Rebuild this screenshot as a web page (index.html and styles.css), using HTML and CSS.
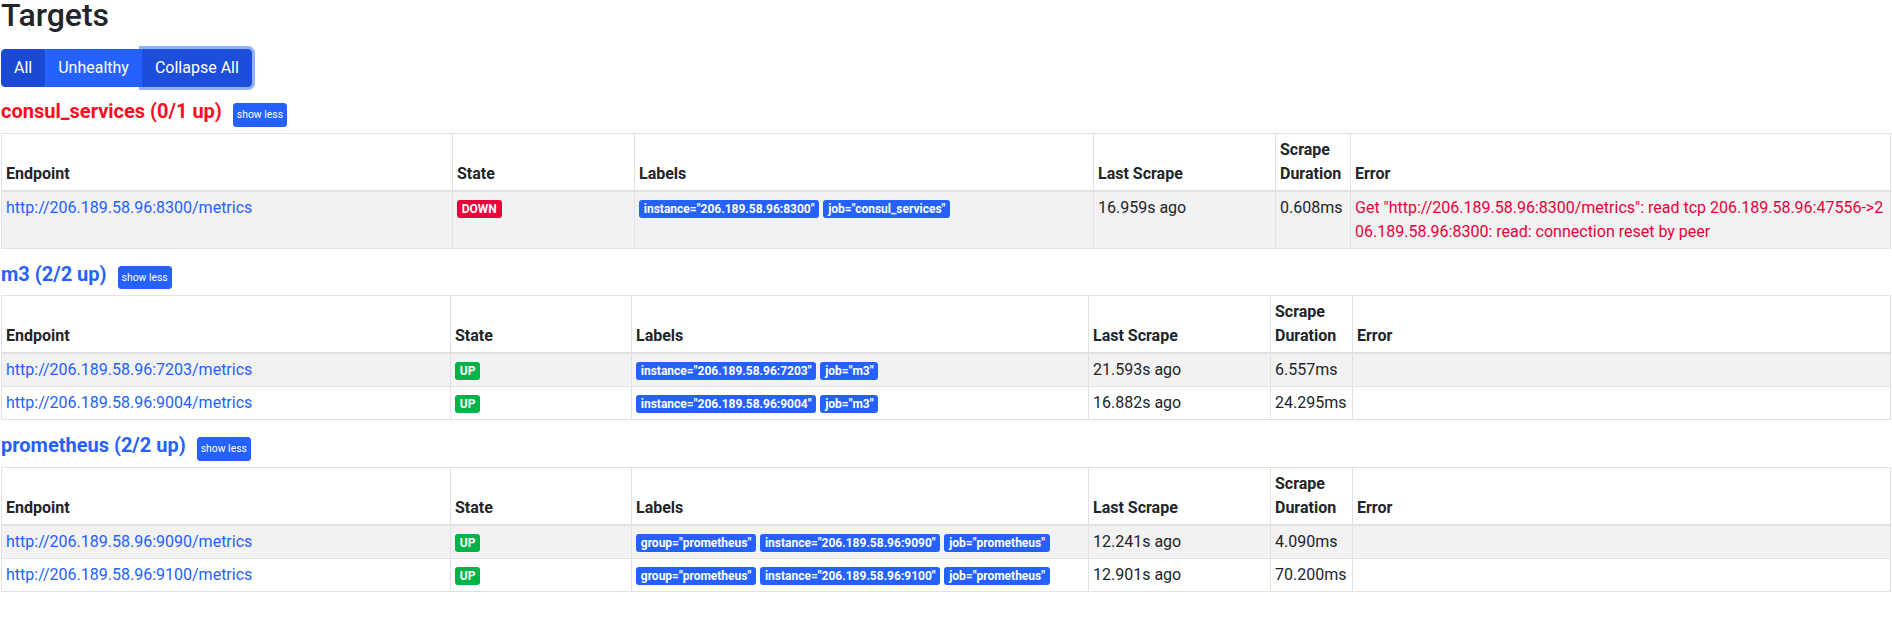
FILE: index.html
```html
<!DOCTYPE html>
<html lang="en">
<head>
<meta charset="utf-8">
<title>Targets</title>
<link rel="stylesheet" href="styles.css">
</head>
<body>
<main class="page">
  <h2 class="page-title">Targets</h2>
  <div class="btn-group">
    <button class="btn is-active">All</button>
    <button class="btn">Unhealthy</button>
    <button class="btn is-focused">Collapse All</button>
  </div>

  <section class="pool">
    <div class="pool-head"><a class="pool-title pool-title--danger" href="#consul_services">consul_services (0/1 up)</a><button class="btn-xs">show less</button></div>
    <table class="targets targets--error">
      <thead>
        <tr>
          <th class="c-endpoint">Endpoint</th>
          <th class="c-state">State</th>
          <th class="c-labels">Labels</th>
          <th class="c-last">Last Scrape</th>
          <th class="c-duration">Scrape Duration</th>
          <th class="c-error">Error</th>
        </tr>
      </thead>
      <tbody>
        <tr>
          <td><a href="#t1">http://206.189.58.96:8300/metrics</a></td>
          <td><span class="badge badge--down">DOWN</span></td>
          <td><span class="badge badge--label">instance="206.189.58.96:8300"</span><span class="badge badge--label">job="consul_services"</span></td>
          <td>16.959s ago</td>
          <td>0.608ms</td>
          <td class="error-text">Get "http://206.189.58.96:8300/metrics": read tcp 206.189.58.96:47556-&gt;206.189.58.96:8300: read: connection reset by peer</td>
        </tr>
      </tbody>
    </table>
  </section>

  <section class="pool">
    <div class="pool-head"><a class="pool-title" href="#m3">m3 (2/2 up)</a><button class="btn-xs">show less</button></div>
    <table class="targets">
      <thead>
        <tr>
          <th class="c-endpoint">Endpoint</th>
          <th class="c-state">State</th>
          <th class="c-labels">Labels</th>
          <th class="c-last">Last Scrape</th>
          <th class="c-duration">Scrape Duration</th>
          <th class="c-error">Error</th>
        </tr>
      </thead>
      <tbody>
        <tr>
          <td><a href="#t2">http://206.189.58.96:7203/metrics</a></td>
          <td><span class="badge badge--up">UP</span></td>
          <td><span class="badge badge--label">instance="206.189.58.96:7203"</span><span class="badge badge--label">job="m3"</span></td>
          <td>21.593s ago</td>
          <td>6.557ms</td>
          <td></td>
        </tr>
        <tr>
          <td><a href="#t3">http://206.189.58.96:9004/metrics</a></td>
          <td><span class="badge badge--up">UP</span></td>
          <td><span class="badge badge--label">instance="206.189.58.96:9004"</span><span class="badge badge--label">job="m3"</span></td>
          <td>16.882s ago</td>
          <td>24.295ms</td>
          <td></td>
        </tr>
      </tbody>
    </table>
  </section>

  <section class="pool">
    <div class="pool-head"><a class="pool-title" href="#prometheus">prometheus (2/2 up)</a><button class="btn-xs">show less</button></div>
    <table class="targets">
      <thead>
        <tr>
          <th class="c-endpoint">Endpoint</th>
          <th class="c-state">State</th>
          <th class="c-labels">Labels</th>
          <th class="c-last">Last Scrape</th>
          <th class="c-duration">Scrape Duration</th>
          <th class="c-error">Error</th>
        </tr>
      </thead>
      <tbody>
        <tr>
          <td><a href="#t4">http://206.189.58.96:9090/metrics</a></td>
          <td><span class="badge badge--up">UP</span></td>
          <td><span class="badge badge--label">group="prometheus"</span><span class="badge badge--label">instance="206.189.58.96:9090"</span><span class="badge badge--label">job="prometheus"</span></td>
          <td>12.241s ago</td>
          <td>4.090ms</td>
          <td></td>
        </tr>
        <tr>
          <td><a href="#t5">http://206.189.58.96:9100/metrics</a></td>
          <td><span class="badge badge--up">UP</span></td>
          <td><span class="badge badge--label">group="prometheus"</span><span class="badge badge--label">instance="206.189.58.96:9100"</span><span class="badge badge--label">job="prometheus"</span></td>
          <td>12.901s ago</td>
          <td>70.200ms</td>
          <td></td>
        </tr>
      </tbody>
    </table>
  </section>
</main>
</body>
</html>
```

FILE: styles.css
```css
* {
  box-sizing: border-box;
}

html,
body {
  margin: 0;
  background: #fff;
}

body {
  font-family: Roboto, "Liberation Sans", Arial, sans-serif;
  font-size: 16px;
  line-height: 1.5;
  color: #212529;
}

.page {
  padding: 0 1px;
}

.page-title {
  margin: 0 0 19px;
  font-size: 32px;
  font-weight: 500;
  line-height: 30px;
}

/* button group */
.btn-group {
  display: flex;
  width: max-content;
  margin-bottom: 12px;
}

.btn {
  margin: 0;
  padding: 6px 12px;
  font-family: inherit;
  font-size: 16px;
  line-height: 24px;
  color: #fff;
  background: #2461ff;
  border: 1px solid #2461ff;
  border-radius: 0;
  cursor: pointer;
}

.btn:first-child {
  border-radius: 4px 0 0 4px;
}

.btn:last-child {
  border-radius: 0 4px 4px 0;
}

.btn.is-active {
  background: #1a49d4;
  border-color: #1a49d4;
}

.btn.is-focused {
  position: relative;
  z-index: 1;
  background: #1d4edb;
  border-color: #1d4edb;
  box-shadow: 0 0 0 3px rgba(36, 97, 255, 0.5);
}

/* scrape pool */
.pool-head {
  margin-bottom: 6px;
  font-size: 20px;
  line-height: 24px;
}

.pool-title {
  font-weight: 700;
  color: #2461ff;
  text-decoration: none;
}

.pool-title--danger {
  color: #ff0b24;
}

.btn-xs {
  display: inline-block;
  margin-left: 11px;
  padding: 3px;
  font-family: inherit;
  font-size: 10.4px;
  line-height: 15.6px;
  color: #fff;
  background: #2461ff;
  border: 1px solid #2461ff;
  border-radius: 3px;
  vertical-align: baseline;
  cursor: pointer;
}

/* table */
.targets {
  width: 100%;
  margin-bottom: 13px;
  border-collapse: collapse;
  table-layout: fixed;
  border: 1px solid #dee2e6;
}

.targets th,
.targets td {
  padding: 4px;
  border: 1px solid #dee2e6;
  text-align: left;
  vertical-align: top;
}

.targets td {
  word-break: break-all;
}

.targets thead th {
  vertical-align: bottom;
  font-weight: 700;
  border-bottom: 2px solid #dee2e6;
}

.targets tbody tr:nth-child(odd) {
  background: rgba(0, 0, 0, 0.05);
}

.targets a {
  color: #2461ff;
  text-decoration: none;
}

.c-endpoint { width: 449px; }
.c-state { width: 181px; }
.c-labels { width: 457px; }
.c-last { width: 182px; }
.c-duration { width: 82px; }

.targets--error .c-endpoint { width: 451px; }
.targets--error .c-state { width: 182px; }
.targets--error .c-labels { width: 459px; }
.targets--error .c-last { width: 182px; }
.targets--error .c-duration { width: 75px; }

.error-text {
  color: #e9003a;
}

/* badges */
.badge {
  display: inline-block;
  padding: 3px 4.8px;
  font-size: 12px;
  font-weight: 700;
  line-height: 1;
  color: #fff;
  border-radius: 3px;
  white-space: nowrap;
  word-break: normal;
}

.badge--down {
  background: #e9003a;
}

.badge--up {
  background: #00b348;
}

.badge--label {
  margin-right: 4px;
  background: #2461ff;
}
```
